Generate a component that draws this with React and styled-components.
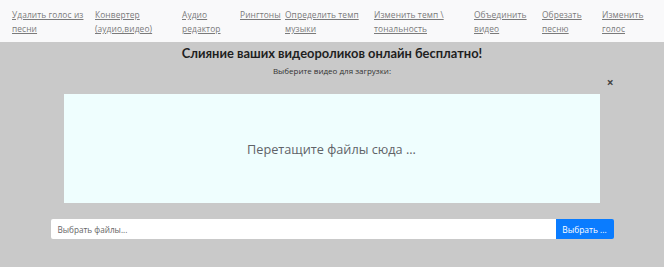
import React from 'react';
import styled, { createGlobalStyle } from 'styled-components';

const GlobalStyle = createGlobalStyle`
  html, body {
    margin: 0;
    padding: 0;
    background: #c9c9c9;
    font-family: "Open Sans", "Liberation Sans", sans-serif;
  }
`;

const NavBar = styled.nav`
  display: flex;
  align-items: flex-start;
  height: 42px;
  box-sizing: border-box;
  padding: 8px 0 0 12px;
  background: #f9f9fa;
`;

const NavLink = styled.a`
  display: block;
  width: ${(p) => p.$w}px;
  flex: none;
  font-size: 8.4px;
  line-height: 14px;
  color: #7a7a7a;
  text-decoration: underline;
  letter-spacing: 0.1px;
`;

const Main = styled.main`
  display: flex;
  flex-direction: column;
  align-items: center;
  padding-top: 2px;
`;

const Title = styled.h1`
  margin: 0;
  font-family: Lato, "Open Sans", sans-serif;
  font-size: 12.9px;
  font-weight: 700;
  line-height: 18px;
  color: #1f1f1f;
`;

const Subtitle = styled.p`
  margin: 3px 0 0;
  font-size: 8px;
  line-height: 12px;
  color: #333;
`;

const Panel = styled.div`
  position: relative;
  width: 563px;
  padding-top: 17px;
`;

const Close = styled.span`
  position: absolute;
  right: 0px;
  top: 0px;
  font-size: 12px;
  font-weight: 700;
  line-height: 12px;
  color: #444;
`;

const DropZone = styled.div`
  display: flex;
  align-items: center;
  justify-content: center;
  width: 536px;
  height: 109px;
  margin-left: 13px;
  background: #effefe;
  font-size: 12.7px;
  color: #5f6368;
`;

const InputRow = styled.div`
  display: flex;
  margin-top: 16px;
  height: 20px;
`;

const FileInput = styled.div`
  flex: 1;
  display: flex;
  align-items: center;
  padding-left: 7px;
  background: #fff;
  font-size: 8.2px;
  color: #666;
  border-radius: 2px 0 0 2px;
`;

const Browse = styled.button`
  width: 58px;
  border: none;
  border-radius: 0 2px 2px 0;
  background: #0a7cff;
  color: #fff;
  font-family: inherit;
  font-size: 8.4px;
  padding: 0;
`;

const links = [
  ['Удалить голос из песни', 83],
  ['Конвертер (аудио,видео)', 87],
  ['Аудио редактор', 58],
  ['Рингтоны', 45],
  ['Определить темп музыки', 89],
  ['Изменить темп \\ тональность', 100],
  ['Объединить видео', 68],
  ['Обрезать песню', 60],
  ['Изменить голос', 50],
];

const App = () => (
  <>
    <GlobalStyle />
    <NavBar>
      {links.map(([text, w]) => (
        <NavLink key={text} $w={w} href="#">
          {text}
        </NavLink>
      ))}
    </NavBar>
    <Main>
      <Title>Слияние ваших видеороликов онлайн бесплатно!</Title>
      <Subtitle>Выберите видео для загрузки:</Subtitle>
      <Panel>
        <Close>×</Close>
        <DropZone>Перетащите файлы сюда ...</DropZone>
        <InputRow>
          <FileInput>Выбрать файлы...</FileInput>
          <Browse>Выбрать ...</Browse>
        </InputRow>
      </Panel>
    </Main>
  </>
);

export default App;
